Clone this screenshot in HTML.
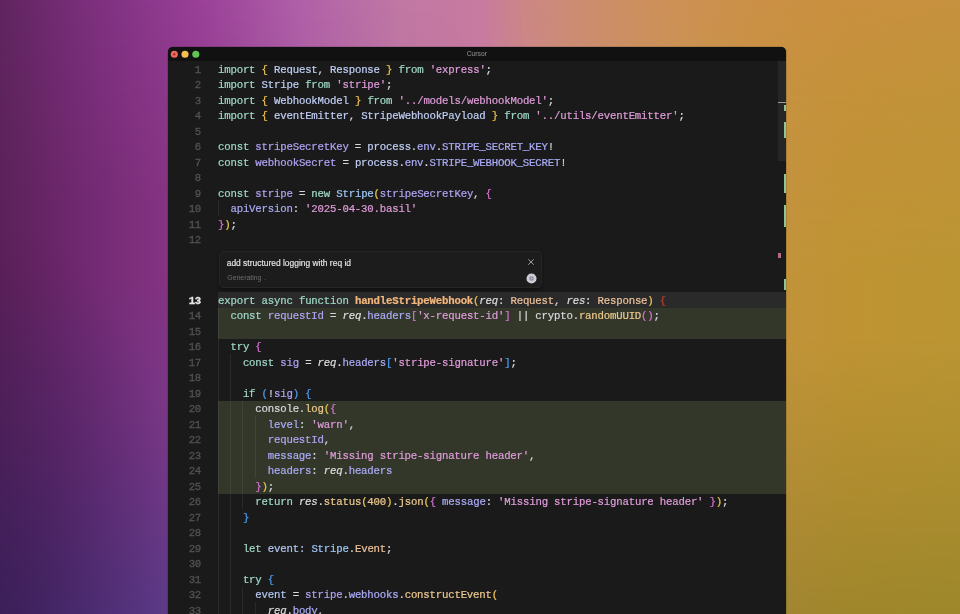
<!DOCTYPE html>
<html lang="en"><head><meta charset="utf-8"><title>Cursor</title>
<style>
*{margin:0;padding:0;box-sizing:border-box}
html,body{width:960px;height:614px;overflow:hidden}
body{position:relative;background:#b0709a;font-family:"Liberation Sans",sans-serif}
#bg{position:absolute;left:0;top:0;width:960px;height:614px;
 background:
  linear-gradient(90deg, #60255f 0%, #7f3180 10.4%, #9a4098 20.8%, #b060a8 31.2%, #c078a4 41.6%, #c87aa0 50%, #cc8888 55.2%, #cc9070 62.5%, #cc9658 70.8%, #c89840 79.2%, #c49834 88.5%, #c09a34 100%);}
#bgl{position:absolute;left:0;top:0;width:480px;height:614px;-webkit-mask-image:linear-gradient(90deg,#000 0%,#000 40%,transparent 100%);mask-image:linear-gradient(90deg,#000 0%,#000 40%,transparent 100%);
 background:
  radial-gradient(ellipse 190px 420px at 0px 640px, rgba(50,10,60,.5) 0%, rgba(50,10,60,0) 100%),
  linear-gradient(180deg, rgba(30,80,160,0) 45%, rgba(30,80,160,.15) 74%, rgba(30,80,160,.36) 100%),
  linear-gradient(180deg, rgba(70,14,64,0) 0%, rgba(70,14,64,.17) 33%, rgba(70,14,64,.17) 100%);}
#bgr{position:absolute;left:480px;top:0;width:480px;height:614px;-webkit-mask-image:linear-gradient(90deg,transparent 0%,#000 60%,#000 100%);mask-image:linear-gradient(90deg,transparent 0%,#000 60%,#000 100%);
 background:
  linear-gradient(180deg, rgba(60,90,20,0) 55%, rgba(60,90,20,.1) 75%, rgba(60,90,20,.24) 100%),
  linear-gradient(180deg, rgba(218,138,84,.36) 0%, rgba(218,138,84,.2) 14%, rgba(218,138,84,0) 45%),
  linear-gradient(180deg, rgba(150,110,40,.1) 0%, rgba(150,110,40,.1) 100%);}
#win{will-change:transform;position:absolute;left:168.0px;top:47.0px;width:618.0px;height:580px;background:#1a1a1a;border-radius:5px 5px 0 0;overflow:hidden;box-shadow:0 0 0 0.5px rgba(0,0,0,.25)}
#tb{position:absolute;left:0;top:0;width:100%;height:14px;background:#111}
#title{position:absolute;left:0;width:100%;top:3px;text-align:center;font-size:6.75px;line-height:7px;color:#7c7c7a;-webkit-text-stroke:0.15px currentColor;text-indent:-0.4px}
.ln{position:absolute;left:0;width:33.10px;text-align:right;font-family:"Liberation Mono",monospace;letter-spacing:-0.1941px;-webkit-text-stroke:0.28px currentColor;font-size:10.7px;line-height:15.49px;height:15.49px;color:#525252;white-space:pre}
.cl{position:absolute;left:50.0px;font-family:"Liberation Mono",monospace;letter-spacing:-0.1941px;-webkit-text-stroke:0.22px currentColor;font-size:10.7px;line-height:15.49px;height:15.49px;white-space:pre;color:#d6d6dd}
.hl{position:absolute;left:49.75px;right:0}
.g{position:absolute;width:1px;background:rgba(255,255,255,.065)}
.k{color:#9fd6c6}
.s{color:#de9bd8}
.y{color:#eec44e}
.p{color:#d674d2}
.b{color:#4f9ef0}
.r{color:#c43a2a}
.t{color:#9cc6f5}
.v{color:#b0a2f2}
.q{color:#aaaaf5}
.w{color:#d6d6dd}
.f{color:#ebc88d}
.o{color:#ecc09a}
.F{color:#f2b67c;font-weight:bold}
.i{color:#dcdcdc;font-style:italic}
.l{color:#bfcdf3}
.n{color:#ebc88d}
.e{color:#b2c5ee}
</style></head>
<body>
<div id="bg"></div><div id="bgl"></div><div id="bgr"></div>
<div id="win">
<div id="tb"><svg style="position:absolute;left:0;top:0" width="40" height="14" viewBox="0 0 40 14"><circle cx="6.30" cy="7.3" r="3.55" fill="#ec6a5e"/><circle cx="6.30" cy="7.3" r="1.15" fill="#9c1f1a"/><circle cx="17.00" cy="7.3" r="3.55" fill="#f4bf4f"/><circle cx="27.80" cy="7.3" r="3.55" fill="#61c554"/></svg><div id="title">Cursor</div></div>
<div class="hl" style="top:245.20px;height:15.50px;background:#2a2a2a"></div>
<div class="hl" style="top:260.70px;height:31.00px;background:#32372a"></div>
<div class="hl" style="top:353.70px;height:93.00px;background:#32372a"></div>
<div class="g" style="left:50.00px;top:153.47px;height:15.48px"></div>
<div class="g" style="left:50.00px;top:260.70px;height:310.00px"></div>
<div class="g" style="left:62.00px;top:307.20px;height:263.50px"></div>
<div class="g" style="left:74.00px;top:353.70px;height:108.50px"></div>
<div class="g" style="left:74.00px;top:539.70px;height:31.00px"></div>
<div class="g" style="left:87.00px;top:369.20px;height:62.00px"></div>
<div class="g" style="left:87.00px;top:555.20px;height:15.50px"></div>
<div class="ln" style="top:15.55px">1</div>
<div class="cl" style="top:15.55px"><span class="k">import</span> <span class="y">{</span> <span class="l">Request</span>, <span class="l">Response</span> <span class="y">}</span> <span class="k">from</span> <span class="s">'express'</span>;</div>
<div class="ln" style="top:30.55px">2</div>
<div class="cl" style="top:30.55px"><span class="k">import</span> <span class="l">Stripe</span> <span class="k">from</span> <span class="s">'stripe'</span>;</div>
<div class="ln" style="top:46.55px">3</div>
<div class="cl" style="top:46.55px"><span class="k">import</span> <span class="y">{</span> <span class="l">WebhookModel</span> <span class="y">}</span> <span class="k">from</span> <span class="s">'../models/webhookModel'</span>;</div>
<div class="ln" style="top:61.55px">4</div>
<div class="cl" style="top:61.55px"><span class="k">import</span> <span class="y">{</span> <span class="l">eventEmitter</span>, <span class="l">StripeWebhookPayload</span> <span class="y">}</span> <span class="k">from</span> <span class="s">'../utils/eventEmitter'</span>;</div>
<div class="ln" style="top:77.56px">5</div>
<div class="ln" style="top:92.56px">6</div>
<div class="cl" style="top:92.56px"><span class="k">const</span> <span class="v">stripeSecretKey</span> = <span class="l">process</span>.<span class="q">env</span>.<span class="q">STRIPE_SECRET_KEY</span>!</div>
<div class="ln" style="top:108.56px">7</div>
<div class="cl" style="top:108.56px"><span class="k">const</span> <span class="v">webhookSecret</span> = <span class="l">process</span>.<span class="q">env</span>.<span class="q">STRIPE_WEBHOOK_SECRET</span>!</div>
<div class="ln" style="top:123.56px">8</div>
<div class="ln" style="top:139.56px">9</div>
<div class="cl" style="top:139.56px"><span class="k">const</span> <span class="v">stripe</span> = <span class="k">new</span> <span class="t">Stripe</span><span class="y">(</span><span class="v">stripeSecretKey</span>, <span class="p">{</span></div>
<div class="ln" style="top:154.56px">10</div>
<div class="cl" style="top:154.56px">  <span class="q">apiVersion</span>: <span class="s">'2025-04-30.basil'</span></div>
<div class="ln" style="top:170.56px">11</div>
<div class="cl" style="top:170.56px"><span class="p">}</span><span class="y">)</span>;</div>
<div class="ln" style="top:185.56px">12</div>
<div class="ln" style="top:246.56px;color:#e6e6e6;font-weight:bold">13</div>
<div class="cl" style="top:246.56px"><span class="k">export</span> <span class="k">async</span> <span class="k">function</span> <span class="F">handleStripeWebhook</span><span class="y">(</span><span class="i">req</span>: <span class="o">Request</span>, <span class="i">res</span>: <span class="o">Response</span><span class="y">)</span> <span class="r">{</span></div>
<div class="ln" style="top:261.56px">14</div>
<div class="cl" style="top:261.56px">  <span class="k">const</span> <span class="v">requestId</span> = <span class="i">req</span>.<span class="q">headers</span><span class="p">[</span><span class="s">'x-request-id'</span><span class="p">]</span> || crypto.<span class="f">randomUUID</span><span class="p">(</span><span class="p">)</span>;</div>
<div class="ln" style="top:277.56px">15</div>
<div class="ln" style="top:292.56px">16</div>
<div class="cl" style="top:292.56px">  <span class="k">try</span> <span class="p">{</span></div>
<div class="ln" style="top:308.56px">17</div>
<div class="cl" style="top:308.56px">    <span class="k">const</span> <span class="v">sig</span> = <span class="i">req</span>.<span class="q">headers</span><span class="b">[</span><span class="s">'stripe-signature'</span><span class="b">]</span>;</div>
<div class="ln" style="top:323.56px">18</div>
<div class="ln" style="top:339.56px">19</div>
<div class="cl" style="top:339.56px">    <span class="k">if</span> <span class="b">(</span>!<span class="v">sig</span><span class="b">)</span> <span class="b">{</span></div>
<div class="ln" style="top:354.56px">20</div>
<div class="cl" style="top:354.56px">      console.<span class="f">log</span><span class="y">(</span><span class="p">{</span></div>
<div class="ln" style="top:370.56px">21</div>
<div class="cl" style="top:370.56px">        <span class="q">level</span>: <span class="s">'warn'</span>,</div>
<div class="ln" style="top:385.56px">22</div>
<div class="cl" style="top:385.56px">        <span class="v">requestId</span>,</div>
<div class="ln" style="top:401.56px">23</div>
<div class="cl" style="top:401.56px">        <span class="q">message</span>: <span class="s">'Missing stripe-signature header'</span>,</div>
<div class="ln" style="top:416.56px">24</div>
<div class="cl" style="top:416.56px">        <span class="q">headers</span>: <span class="i">req</span>.<span class="q">headers</span></div>
<div class="ln" style="top:432.56px">25</div>
<div class="cl" style="top:432.56px">      <span class="p">}</span><span class="y">)</span>;</div>
<div class="ln" style="top:447.56px">26</div>
<div class="cl" style="top:447.56px">      <span class="k">return</span> <span class="i">res</span>.<span class="f">status</span><span class="y">(</span><span class="n">400</span><span class="y">)</span>.<span class="f">json</span><span class="y">(</span><span class="p">{</span> <span class="q">message</span>: <span class="s">'Missing stripe-signature header'</span> <span class="p">}</span><span class="y">)</span>;</div>
<div class="ln" style="top:463.55px">27</div>
<div class="cl" style="top:463.55px">    <span class="b">}</span></div>
<div class="ln" style="top:478.55px">28</div>
<div class="ln" style="top:494.55px">29</div>
<div class="cl" style="top:494.55px">    <span class="k">let</span> <span class="e">event</span><span class="e">:</span> <span class="t">Stripe</span>.<span class="o">Event</span>;</div>
<div class="ln" style="top:509.55px">30</div>
<div class="ln" style="top:525.55px">31</div>
<div class="cl" style="top:525.55px">    <span class="k">try</span> <span class="b">{</span></div>
<div class="ln" style="top:540.55px">32</div>
<div class="cl" style="top:540.55px">      <span class="e">event</span> = <span class="v">stripe</span>.<span class="q">webhooks</span>.<span class="f">constructEvent</span><span class="y">(</span></div>
<div class="ln" style="top:556.55px">33</div>
<div class="cl" style="top:556.55px">        <span class="i">req</span>.<span class="q">body</span>,</div>
<div id="pb" style="position:absolute;left:51.00px;top:204.00px;width:323.00px;height:37.00px;background:#1c1c1c;border:1px solid #252525;border-radius:4px;box-shadow:0 1.5px 3px rgba(0,0,0,.4)">
<div id="pt" style="position:absolute;left:6.70px;top:6.20px;font-size:8.45px;line-height:10px;color:#e6e6e6;white-space:nowrap;-webkit-text-stroke:0.15px currentColor">add structured logging with req id</div>
<div id="pg" style="position:absolute;left:7.30px;top:22.20px;font-size:6.9px;line-height:8px;color:#6e6e6e;white-space:nowrap">Generating<span style="margin-left:2.6px">.</span></div>
<svg style="position:absolute;left:307.00px;top:6.20px" width="8" height="8" viewBox="0 0 8 8"><path d="M1.25 1.25 L6.75 6.75 M6.75 1.25 L1.25 6.75" stroke="#c4c4c4" stroke-width="0.75" fill="none"/></svg>
<svg style="position:absolute;left:305.60px;top:20.55px" width="11" height="11" viewBox="0 0 11 11"><circle cx="5.5" cy="5.5" r="5.05" fill="#cdcdd3"/><rect x="3.5" y="3.5" width="4" height="4" rx="0.8" fill="#85859a"/><rect x="4.7" y="4.7" width="1.6" height="1.6" fill="#c6c6d2"/></svg>
</div>
<div style="position:absolute;left:610.00px;top:14.00px;width:8.00px;height:100.20px;background:#262626"></div>
<div style="position:absolute;left:610.00px;top:54.60px;width:8.00px;height:0.90px;background:#9a9a9a"></div>
<div style="position:absolute;left:616.20px;top:58.00px;width:1.80px;height:6.00px;background:#8ec496"></div>
<div style="position:absolute;left:616.20px;top:74.50px;width:1.80px;height:16.50px;background:#8ec496"></div>
<div style="position:absolute;left:616.20px;top:127.40px;width:1.80px;height:19.00px;background:#8ec496"></div>
<div style="position:absolute;left:616.20px;top:158.00px;width:1.80px;height:21.70px;background:#8ec496"></div>
<div style="position:absolute;left:616.20px;top:231.70px;width:1.80px;height:11.50px;background:#8ec496"></div>
<div style="position:absolute;left:610.40px;top:206.40px;width:3.00px;height:4.60px;background:#b46e7e"></div>
</div>
</body></html>
